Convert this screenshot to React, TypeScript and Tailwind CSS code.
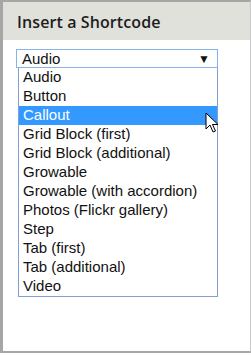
const options = [
  'Audio',
  'Button',
  'Callout',
  'Grid Block (first)',
  'Grid Block (additional)',
  'Growable',
  'Growable (with accordion)',
  'Photos (Flickr gallery)',
  'Step',
  'Tab (first)',
  'Tab (additional)',
  'Video',
];

function Cursor() {
  return (
    <svg
      className="absolute left-[205px] top-[112px]"
      width="14"
      height="22"
      viewBox="0 0 14 22"
    >
      <path
        d="M1 1 L1 17 L5 13 L8 20 L10.5 19 L7.5 12.5 L13 12.5 Z"
        fill="#fff"
        stroke="#000"
        strokeWidth="1"
        strokeLinejoin="round"
      />
    </svg>
  );
}

export default function App() {
  return (
    <div className="relative w-[251px] h-[355px] bg-white overflow-hidden">
      <div className="h-[353px] border-l-[3px] border-t-2 border-b-2 border-r border-[#a6a6a6] border-r-[#c8c8c8] flex flex-col">
        {/* Header */}
        <div className="h-[38px] bg-[#e1e1dc] flex items-center pl-[14px] pt-[2px]">
          <h1 className="text-[16px] font-semibold text-[#1d1d1d] font-['Open_Sans',sans-serif] tracking-[0.1px]">
            Insert a Shortcode
          </h1>
        </div>

        {/* Body */}
        <div className="flex-1 pt-[9px] pl-[13px] font-['Liberation_Sans',Arial,sans-serif] text-[15px] text-[#111]">
          <div className="w-[202px] h-[19px] border border-[#86b3ec] flex items-center justify-between pl-[5px] pr-[7px] leading-none">
            <span>Audio</span>
            <span className="text-[12px]">▼</span>
          </div>
          <ul className="ml-[2px] w-[200px] border border-t-0 border-[#7f9fd6]">
            {options.map(opt => (
              <li
                key={opt}
                className={
                  opt === 'Callout'
                    ? 'h-[19px] pl-[4px] flex items-center bg-[#3399ff] text-white'
                    : 'h-[19px] pl-[4px] flex items-center'
                }
              >
                {opt}
              </li>
            ))}
          </ul>
        </div>
      </div>
      <Cursor />
    </div>
  );
}
